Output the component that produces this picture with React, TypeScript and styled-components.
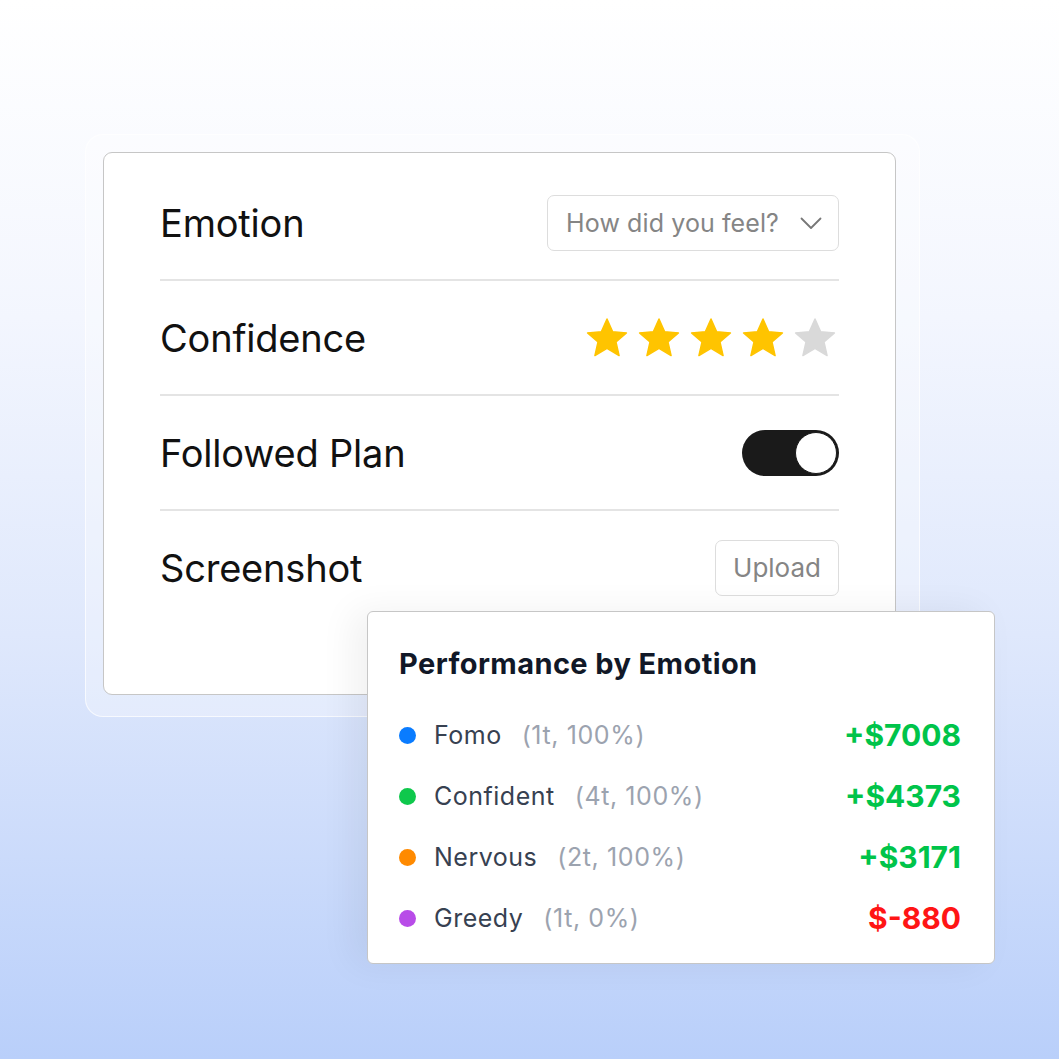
import styled, { createGlobalStyle } from "styled-components";

const GlobalStyle = createGlobalStyle`
  html, body {
    margin: 0;
    padding: 0;
  }
  body {
    font-family: "Inter", "Noto Sans", sans-serif;
  }
`;

const EMOTIONS = [
  { name: "Fomo", meta: "(1t, 100%)", value: "+$7008", dot: "#0a7cff", positive: true },
  { name: "Confident", meta: "(4t, 100%)", value: "+$4373", dot: "#0fc84c", positive: true },
  { name: "Nervous", meta: "(2t, 100%)", value: "+$3171", dot: "#ff8a00", positive: true },
  { name: "Greedy", meta: "(1t, 0%)", value: "$-880", dot: "#b84ce8", positive: false },
];

function Star({ filled }: { filled: boolean }) {
  return (
    <svg width="44" height="44" viewBox="0 0 24 24">
      <polygon
        points="12,1.6 15.1,8.6 22.6,9.2 16.9,14.1 18.6,21.6 12,17.6 5.4,21.6 7.1,14.1 1.4,9.2 8.9,8.6"
        fill={filled ? "#ffc400" : "#d9d9d9"}
        stroke={filled ? "#ffc400" : "#d9d9d9"}
        strokeWidth="0.8"
        strokeLinejoin="round"
      />
    </svg>
  );
}

function Chevron() {
  return (
    <svg width="24" height="24" viewBox="0 0 24 24" fill="none">
      <path d="M2.5 7.5l9.5 9.5 9.5-9.5" stroke="#777" strokeWidth="1.8" strokeLinecap="round" strokeLinejoin="round" />
    </svg>
  );
}

export default function App() {
  return (
    <>
      <GlobalStyle />
      <Page>
        <Halo>
          <Card>
            <Row>
              <Label>Emotion</Label>
              <Select>
                <span>How did you feel?</span>
                <Chevron />
              </Select>
            </Row>
            <Row>
              <Label>Confidence</Label>
              <Stars>
                {[1, 2, 3, 4, 5].map((n) => (
                  <Star key={n} filled={n <= 4} />
                ))}
              </Stars>
            </Row>
            <Row>
              <Label>Followed Plan</Label>
              <Toggle>
                <Knob />
              </Toggle>
            </Row>
            <Row last>
              <Label>Screenshot</Label>
              <GhostButton>Upload</GhostButton>
            </Row>
          </Card>
        </Halo>
        <StatsCard>
          <StatsTitle>Performance by Emotion</StatsTitle>
          <StatsList>
            {EMOTIONS.map((e) => (
              <StatsRow key={e.name}>
                <Dot color={e.dot} />
                <EmotionName>{e.name}</EmotionName>
                <Meta>{e.meta}</Meta>
                <Value positive={e.positive}>{e.value}</Value>
              </StatsRow>
            ))}
          </StatsList>
        </StatsCard>
      </Page>
    </>
  );
}

const Page = styled.div`
  position: relative;
  width: 1059px;
  height: 1059px;
  box-sizing: border-box;
  padding: 134px 0 0 85px;
  background: linear-gradient(180deg, #ffffff 0%, #f3f6fe 30%, #dfe8fc 60%, #b9cffa 100%);
  overflow: hidden;
`;

const Halo = styled.div`
  width: 835px;
  box-sizing: border-box;
  padding: 17px 23px 21px 17px;
  border-radius: 18px;
  background: rgba(255, 255, 255, 0.3);
  border: 1px solid rgba(255, 255, 255, 0.7);
`;

const Card = styled.div`
  background: #ffffff;
  border: 1.5px solid #c6c6c6;
  border-radius: 9px;
  padding: 13px 56px 70px 56px;
`;

const Row = styled.div<{ last?: boolean }>`
  display: flex;
  align-items: center;
  justify-content: space-between;
  height: 113px;
  border-bottom: ${({ last }) => (last ? "none" : "2px solid #e4e4e4")};
`;

const Label = styled.div`
  font-family: "Inter", sans-serif;
  font-size: 38px;
  font-weight: 400;
  color: #111111;
  letter-spacing: -0.2px;
`;

const Select = styled.div`
  display: flex;
  align-items: center;
  gap: 20px;
  height: 56px;
  box-sizing: border-box;
  padding: 0 15px 0 18px;
  border: 1.5px solid #dddddd;
  border-radius: 7px;
  font-size: 25px;
  color: #858585;
  letter-spacing: 0.1px;
`;

const Stars = styled.div`
  display: flex;
  gap: 8px;
  margin-right: 2px;
`;

const Toggle = styled.div`
  display: flex;
  justify-content: flex-end;
  align-items: center;
  width: 97px;
  height: 46px;
  box-sizing: border-box;
  padding: 2px;
  border-radius: 23px;
  background: #1a1a1a;
`;

const Knob = styled.div`
  width: 42px;
  height: 42px;
  box-sizing: border-box;
  border-radius: 50%;
  background: #ffffff;
  border: 1px solid #1a1a1a;
`;

const GhostButton = styled.div`
  display: flex;
  align-items: center;
  justify-content: center;
  width: 124px;
  height: 56px;
  box-sizing: border-box;
  border: 1.5px solid #dddddd;
  border-radius: 7px;
  font-size: 26px;
  color: #858585;
`;

const StatsCard = styled.div`
  position: absolute;
  left: 367px;
  top: 611px;
  width: 628px;
  height: 353px;
  box-sizing: border-box;
  padding: 34px 33px 0 31px;
  background: #ffffff;
  border: 1.5px solid #c6c6c6;
  border-radius: 6px;
  box-shadow: -14px 0 36px rgba(0, 0, 0, 0.06);
`;

const StatsTitle = styled.div`
  font-size: 29px;
  font-weight: 700;
  color: #111827;
  letter-spacing: 0.4px;
`;

const StatsList = styled.div`
  display: flex;
  flex-direction: column;
  gap: 23px;
  margin-top: 35px;
`;

const StatsRow = styled.div`
  display: flex;
  align-items: center;
  height: 38px;
`;

const Dot = styled.span<{ color: string }>`
  width: 17px;
  height: 17px;
  border-radius: 50%;
  background: ${({ color }) => color};
  margin-right: 18px;
`;

const EmotionName = styled.span`
  font-size: 25px;
  color: #374151;
  letter-spacing: 0.5px;
  margin-right: 20px;
`;

const Meta = styled.span`
  font-size: 25px;
  color: #9ca3af;
  letter-spacing: 0.6px;
`;

const Value = styled.span<{ positive: boolean }>`
  margin-left: auto;
  font-size: 30px;
  font-weight: 700;
  color: ${({ positive }) => (positive ? "#00c44a" : "#ff1515")};
`;
